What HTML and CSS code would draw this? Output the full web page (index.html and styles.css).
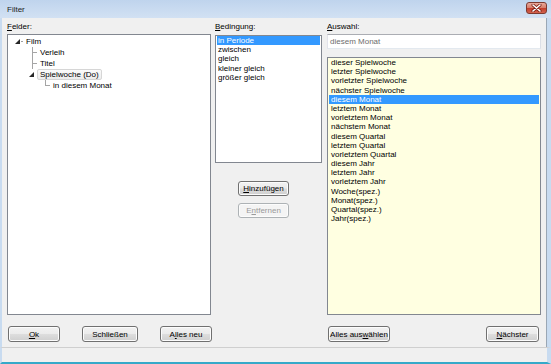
FILE: index.html
```html
<!DOCTYPE html>
<html lang="de">
<head>
    <meta charset="UTF-8">
    <meta name="viewport" content="width=device-width, initial-scale=1.0">
    <title>Filter</title>
    <link rel="stylesheet" href="styles.css">
</head>
<body>
    <div class="window">
        <div class="titlebar">
            <span class="title">Filter</span>
            <span class="close">
                <svg width="11" height="8" viewBox="0 0 11 8">
                    <path d="M2 1 L9 7 M9 1 L2 7" stroke="#7a1e14" stroke-width="3" stroke-linecap="round"/>
                    <path d="M2 1 L9 7 M9 1 L2 7" stroke="#ffffff" stroke-width="1.6" stroke-linecap="round"/>
                </svg>
            </span>
        </div>

        <div class="body">
            <div class="panes">
                <!-- Felder -->
                <div class="col col-fields">
                    <div class="label"><u>F</u>elder:</div>
                    <div class="tree">
                        <div class="row lvl0">
                            <span class="expander"></span><span class="stub"></span>
                            <span class="node">Film</span>
                        </div>
                        <div class="row lvl1">
                            <span class="tee"></span>
                            <span class="node">Verleih</span>
                        </div>
                        <div class="row lvl1">
                            <span class="tee"></span>
                            <span class="node">Titel</span>
                        </div>
                        <div class="row lvl1x">
                            <span class="expander"></span>
                            <span class="node current">Spielwoche (Do)</span>
                        </div>
                        <div class="row lvl2">
                            <span class="ell"></span>
                            <span class="node">in diesem Monat</span>
                        </div>
                    </div>
                </div>

                <!-- Bedingung -->
                <div class="col col-cond">
                    <div class="label"><u>B</u>edingung:</div>
                    <ul class="list cond">
                        <li class="selected">in Periode</li>
                        <li>zwischen</li>
                        <li>gleich</li>
                        <li>kleiner gleich</li>
                        <li>größer gleich</li>
                    </ul>
                    <div class="mid-buttons">
                        <button class="btn"><u>H</u>inzufügen</button>
                        <button class="btn" disabled>E<u>n</u>tfernen</button>
                    </div>
                </div>

                <!-- Auswahl -->
                <div class="col col-sel">
                    <div class="label"><u>A</u>uswahl:</div>
                    <div class="textbox">diesem Monat</div>
                    <ul class="list values">
                        <li>dieser Spielwoche</li>
                        <li>letzter Spielwoche</li>
                        <li>vorletzter Spielwoche</li>
                        <li>nächster Spielwoche</li>
                        <li class="selected">diesem Monat</li>
                        <li>letztem Monat</li>
                        <li>vorletztem Monat</li>
                        <li>nächstem Monat</li>
                        <li>diesem Quartal</li>
                        <li>letztem Quartal</li>
                        <li>vorletztem Quartal</li>
                        <li>diesem Jahr</li>
                        <li>letztem Jahr</li>
                        <li>vorletztem Jahr</li>
                        <li>Woche(spez.)</li>
                        <li>Monat(spez.)</li>
                        <li>Quartal(spez.)</li>
                        <li>Jahr(spez.)</li>
                    </ul>
                </div>
            </div>

            <div class="actions">
                <div class="actions-left">
                    <button class="btn w-ok"><u>O</u>k</button>
                    <button class="btn w-close">Schließen</button>
                    <button class="btn w-new">A<u>l</u>les neu</button>
                </div>
                <div class="actions-right">
                    <button class="btn w-all">Alles aus<u>w</u>ählen</button>
                    <button class="btn w-next"><u>N</u>ächster</button>
                </div>
            </div>
        </div>

        <div class="statusbar"></div>
    </div>
</body>
</html>
```

FILE: styles.css
```css
* {
    box-sizing: border-box;
    margin: 0;
    padding: 0;
}
body {
    font-family: 'Liberation Sans', Arial, sans-serif;
    font-size: 8px;
    color: #000;
    background: #ffffff;
}
.window {
    width: 551px;
    height: 364px;
    display: flex;
    flex-direction: column;
    background: #f0f0f0;
}

/* title bar */
.titlebar {
    height: 18px;
    display: flex;
    align-items: center;
    justify-content: space-between;
    padding: 0 4px 0 7px;
    background: linear-gradient(#bfd4ed, #d2e1f3);
}
.title {
    font-size: 8px;
    color: #1c1c1c;
}
.close {
    width: 21px;
    height: 12px;
    margin-top: -3px;
    display: flex;
    align-items: center;
    justify-content: center;
    border: 1px solid #7d3a30;
    border-radius: 3px;
    background: linear-gradient(#e9aa9c 0%, #d8806e 45%, #c4402e 55%, #d2634f 100%);
}

/* body */
.body {
    flex: 1;
    display: flex;
    flex-direction: column;
    padding: 4px 4px 5px 5px;
    border-left: 2px solid #c8dbf0;
    border-right: 4px solid #c8dbf0;
    box-shadow: inset -1px 0 0 #9aa7b5;
}
.panes {
    flex: 1;
    display: flex;
}
.col {
    display: flex;
    flex-direction: column;
}
.col-fields { width: 204px; margin-right: 4px; }
.col-cond { width: 107px; margin-right: 5px; }
.col-sel { width: 214px; }
.label {
    height: 12px;
    line-height: 10px;
}

/* tree */
.tree {
    flex: 1;
    background: #fff;
    border: 1px solid #828790;
    padding-top: 1px;
}
.row {
    height: 11px;
    display: flex;
    align-items: center;
}
.lvl0 { padding-left: 7px; }
.lvl1 { padding-left: 24px; }
.lvl1x { padding-left: 21px; }
.lvl2 { padding-left: 37px; }
.expander {
    width: 5px;
    height: 5px;
    background: #262626;
    clip-path: polygon(100% 0, 100% 100%, 0 100%);
}
.stub {
    width: 2px;
    height: 1px;
    margin-left: 1px;
    background: #a0a0a0;
}
.tee, .ell {
    width: 5px;
    height: 11px;
    background:
        linear-gradient(#a5a5a5, #a5a5a5) 0 0 / 1px 100% no-repeat,
        linear-gradient(#a5a5a5, #a5a5a5) 0 5px / 100% 1px no-repeat;
}
.ell {
    background:
        linear-gradient(#a5a5a5, #a5a5a5) 0 0 / 1px 6px no-repeat,
        linear-gradient(#a5a5a5, #a5a5a5) 0 5px / 100% 1px no-repeat;
}
.node {
    padding: 0 2px;
    line-height: 9px;
    border: 1px solid transparent;
}
.lvl0 .node { margin-left: 0; }
.lvl1 .node, .lvl2 .node { margin-left: 0; }
.lvl1x .node { margin-left: 3px; }
.current {
    border-color: #d6d6d6;
    border-radius: 2px;
    background: linear-gradient(#fbfbfb, #ececec);
}

/* lists */
.list {
    list-style: none;
    border: 1px solid #828790;
    background: #fff;
}
.list li {
    height: 9.2px;
    line-height: 9.2px;
    padding-left: 2px;
    white-space: nowrap;
}
.list li.selected {
    background: #3399ff;
    color: #fff;
}
.cond {
    height: 128px;
    margin-top: 1px;
    padding: 0 1px;
}
.cond li { padding-left: 1px; }
.values {
    flex: 1;
    background: #ffffe1;
    padding: 0 1px;
    margin-top: 8px;
}
.textbox {
    height: 15px;
    line-height: 13px;
    padding-left: 2px;
    background: #fff;
    border: 1px solid #abadb3;
    border-color: #abadb3 #dbdfe6 #e3e9ef #e2e3ea;
    color: #6d6d6d;
}

/* buttons */
.btn {
    font-family: inherit;
    font-size: 8px;
    color: #000;
    height: 16px;
    border: 1px solid #707070;
    border-radius: 3px;
    background: linear-gradient(#f2f2f2 0%, #ebebeb 48%, #dddddd 52%, #cfcfcf 100%);
    box-shadow: inset 0 0 0 1px #fcfcfc;
}
.btn:disabled {
    color: #9a9a9a;
    border-color: #adb2b5;
    background: #f4f4f4;
}
.mid-buttons {
    display: flex;
    flex-direction: column;
    gap: 7px;
    margin: 18px 0 0 23px;
}
.mid-buttons .btn {
    width: 51px;
    height: 15px;
}

.actions {
    display: flex;
    margin-top: 11px;
}
.actions-left {
    width: 320px;
    display: flex;
    gap: 22px;
    padding-left: 1px;
}
.actions-right {
    flex: 1;
    display: flex;
    justify-content: space-between;
    padding: 0 4px 0 1px;
}
.w-ok { width: 52px; }
.w-close { width: 56px; }
.w-new { width: 52px; }
.w-all { width: 62px; }
.w-next { width: 53px; }

/* status bar */
.statusbar {
    height: 17px;
    background: #f0f0f0;
    border-top: 1px solid #cfcfcf;
    border-left: 2px solid #c8dbf0;
    border-right: 4px solid #c8dbf0;
    border-bottom: 2px solid #35a9c9;
}
```
